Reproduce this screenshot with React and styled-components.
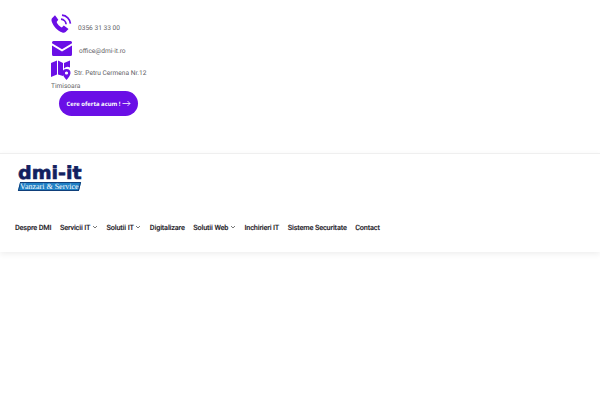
import React from "react";
import styled, { createGlobalStyle } from "styled-components";

const Global = createGlobalStyle`
  html, body { margin: 0; padding: 0; background: #fff; }
  body { font-family: Roboto, "Liberation Sans", sans-serif; overflow: hidden; text-rendering: geometricPrecision; }
`;
const Page = styled.div`width: 600px; height: 400px; overflow: hidden; background: #fff;`;
const Contact = styled.section`
  height: 153px; box-sizing: border-box; padding: 13px 0 0 51px; opacity: .999;
  display: flex; flex-direction: column; align-items: flex-start;
`;
const Row = styled.div`
  display: flex; align-items: center; height: ${p => p.$h}px; padding-left: ${p => p.$pl || 0}px;
`;
const Label = styled.span`
  font-size: 6.6px; color: #5f5f66; margin-left: ${p => p.$ml}px; margin-top: ${p => p.$mt || 0}px; white-space: nowrap;
`;
const City = styled.div`font-size: 6.6px; color: #5f5f66; line-height: 10px;`;
const Cta = styled.a`
  display: flex; align-items: center; justify-content: center; gap: 1px;
  width: 79px; height: 25px; margin: 0 0 0 8px; border-radius: 13px;
  background: #6a0fe6; color: #fff; font-size: 5.9px; font-weight: 700; font-family: "Open Sans", sans-serif; white-space: nowrap;
`;
const Header = styled.header`
  height: 99px; box-sizing: border-box; border-top: 1px solid #efefef;
  box-shadow: 0 2px 6px rgba(0,0,0,.07); display: flex; flex-direction: column; padding: 11px 0 0 15px;
`;
const Logo = styled.div`display: flex; flex-direction: column; align-items: flex-start; width: 68px; height: 28px; margin-left: 3px;`;
const LogoWord = styled.div`
  font-family: "DejaVu Sans", sans-serif; font-weight: 700; font-size: 18px; line-height: 17px; color: #12205f;
  transform: scaleX(1.06); transform-origin: left; -webkit-text-stroke: .6px #12205f;
`;
const LogoBand = styled.div`
  width: 61px; height: 9px; box-sizing: border-box; background: #1f7fc4; border: .5px solid #0f3f7a; transform: skewX(-14deg); margin-left: 1px;
  display: flex; align-items: center; justify-content: center;
`;
const LogoText = styled.span`
  font-family: "Liberation Serif", serif; font-size: 8px; color: #fff; transform: skewX(14deg); white-space: nowrap; line-height: 9px;
`;
const Nav = styled.nav`display: flex; align-items: center; gap: 8.6px; margin-top: 26px; height: 16px; opacity: .999;`;
const Item = styled.a`
  display: flex; align-items: center; gap: 1.500px; font-size: 7.3px; letter-spacing: -.16px; font-weight: 500; color: #1f2229; font-family: Roboto, sans-serif; white-space: nowrap; -webkit-text-stroke: .1px #1f2229;
`;
const Chevron = () => (
  <svg width="6" height="6" viewBox="0 0 6 6" fill="none" stroke="#555" strokeWidth=".8"><path d="M1 2l2 2 2-2" /></svg>
);
const PhoneIcon = () => (
  <svg width="21" height="21" viewBox="0 0 21 21" fill="#6a0fe6">
    <path d="M1 4.200 4 1.200l3.300 4.600-1.700 2.100c.9 2.200 2.900 4.400 5.200 5.500l2-1.800 4.700 3.300-2.900 3.100c-.8.8-2.100 1-3.300.6C6.200 16.700 2.600 12.600.8 7.800.4 6.500.3 5.100 1 4.200z" />
    <path d="M10 5.200c2.700.2 4.900 2.400 5.100 5.100" fill="none" stroke="#6a0fe6" strokeWidth="1.700" />
    <path d="M11 1.200c4.500.3 8.100 3.900 8.400 8.400" fill="none" stroke="#6a0fe6" strokeWidth="1.700" />
  </svg>
);
const MailIcon = () => (
  <svg width="20" height="15" viewBox="0 0 20 15" fill="#6a0fe6">
    <path d="M1.500 0h17A1.500 1.500 0 0 1 20 1.500v.8l-10 6-10-6v-.8A1.500 1.500 0 0 1 1.500 0z" />
    <path d="M0 4.500l10 6 10-6v9A1.500 1.500 0 0 1 18.500 15h-17A1.500 1.500 0 0 1 0 13.500z" />
  </svg>
);
const MapIcon = () => (
  <svg width="21" height="21" viewBox="0 0 21 21" fill="#6a0fe6">
    <path d="M0 3 6 .5V14.500L0 17z" />
    <path d="M7 .5 12 3v13l-5-1.500z" />
    <path d="M13 3 19 .5V7.500a5 5 0 0 0-6 1z" />
    <path fillRule="evenodd" d="M15.500 9a4 4 0 0 1 4 4c0 2.700-4 7-4 7s-4-4.300-4-7a4 4 0 0 1 4-4zm0 2.400a1.600 1.600 0 1 0 0 3.200 1.600 1.600 0 0 0 0-3.200z" />
  </svg>
);
const Arrow = () => (
  <svg width="9" height="7" viewBox="0 0 9 7" fill="none" stroke="#fff" strokeWidth=".8"><path d="M.5 3.500h7.500M5.500 1l2.500 2.500L5.500 6" /></svg>
);
const menu = [["Despre DMI"],["Servicii IT",1],["Solutii IT",1],["Digitalizare"],["Solutii Web",1],["Inchirieri IT"],["Sisteme Securitate"],["Contact"]];
export default function App() {
  return (
    <Page>
      <Global />
      <Contact>
        <Row $h={23}><PhoneIcon /><Label $ml={6} $mt={6}>0356 31 33 00</Label></Row>
        <Row $h={24} $pl={1}><MailIcon /><Label $ml={7} $mt={6}>office@dmi-it.ro</Label></Row>
        <Row $h={21}><MapIcon /><Label $ml={2} $mt={5}>Str. Petru Cermena Nr.12</Label></Row>
        <City>Timisoara</City>
        <Cta>Cere oferta acum ! <Arrow /></Cta>
      </Contact>
      <Header>
        <Logo>
          <LogoWord>dmi-it</LogoWord>
          <LogoBand><LogoText>Vanzari &amp; Service</LogoText></LogoBand>
        </Logo>
        <Nav>
          {menu.map(([t, c]) => <Item key={t}>{t}{c && <Chevron />}</Item>)}
        </Nav>
      </Header>
    </Page>
  );
}
